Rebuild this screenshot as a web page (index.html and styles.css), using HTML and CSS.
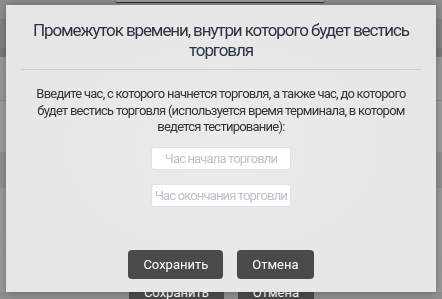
FILE: index.html
```html
<!DOCTYPE html>
<html lang="ru">
<head>
    <meta charset="UTF-8">
    <meta name="viewport" content="width=device-width, initial-scale=1.0">
    <title>Торговое время</title>
    <link rel="stylesheet" href="styles.css">
</head>
<body>
    <!-- страница под затемнением -->
    <div class="page">
        <div class="band band-top"><div class="top-field"></div></div>
        <div class="band band-2"></div>
        <div class="band band-3"></div>
        <div class="band band-4"></div>
        <div class="band band-line"></div>
        <div class="band band-5"></div>
        <div class="band band-6"></div>
        <div class="band band-7">
            <div class="page-actions">
                <button class="btn btn-dim">Сохранить</button>
                <button class="btn btn-dim">Отмена</button>
            </div>
        </div>
    </div>

    <!-- модальное окно -->
    <div class="modal">
        <h2 class="modal-title">Промежуток времени, внутри которого будет вестись торговля</h2>
        <hr class="modal-sep">
        <p class="modal-text">Введите час, с которого начнется торговля, а также час, до которого будет вестись торговля (используется время терминала, в котором ведется тестирование):</p>
        <div class="fields">
            <input type="text" class="field" placeholder="Час начала торговли">
            <input type="text" class="field" placeholder="Час окончания торговли">
        </div>
        <div class="actions">
            <button class="btn">Сохранить</button>
            <button class="btn">Отмена</button>
        </div>
    </div>
</body>
</html>
```

FILE: styles.css
```css
/* базовые стили */
body { margin: 0; font-family: Roboto, "Liberation Sans", sans-serif; background: #9a9a9a; overflow: hidden; }

/* фон страницы */
.page { height: 299px; }
.band { width: 100%; }
.band-top { height: 19px; background: #8e8e8e; display: flex; justify-content: center; }
.top-field { width: 210px; height: 2px; margin-left: -2px; background: #9c9c9c; border-bottom: 1px solid #2e2e2e; border-radius: 0 0 4px 4px; }
.band-2 { height: 29px; background: #838383; }
.band-3 { height: 9px; background: #7b7b7b; }
.band-4 { height: 43px; background: #999; }
.band-line { height: 1px; background: #8a8a8a; }
.band-5 { height: 51px; background: #9d9d9d; }
.band-6 { height: 36px; background: #8f8f8f; }
.band-7 { height: 111px; background: linear-gradient(#9b9b9b, #9a9a9a 94%, #8e8e8e 94%); }
.page-actions { display: flex; justify-content: center; gap: 14px; padding: 90px 0 0 1px; }
.btn-dim { background: #2d2d2d; color: #a8a8a8; }

/* модальное окно */
.modal { position: fixed; left: 6px; top: 5px; width: 430px; height: 287px; box-sizing: border-box; padding: 15px 15px 0; background: radial-gradient(ellipse at center, #ebebeb, #e5e5e5); box-shadow: 0 0 8px rgba(0,0,0,0.3); text-align: center; }
.modal-title { margin: 0; font-size: 17px; line-height: 20px; font-weight: 400; color: #2b3240; letter-spacing: -1.1px; }
.modal-sep { margin: 9px 0 0; border: 0; border-top: 1px solid #cdcdcd; }
.modal-text { margin: 16px 0 0; padding: 0 12px; font-size: 13px; line-height: 16.5px; color: #333; letter-spacing: -0.75px; }
.fields { display: flex; flex-direction: column; align-items: center; gap: 14px; margin-top: 11px; }
.field { width: 140px; height: 23px; box-sizing: border-box; padding: 0; border: 1px solid #e2e2e2; border-radius: 3px; background: #fff; font-family: inherit; font-size: 13px; text-align: center; letter-spacing: -0.85px; outline: none; }
.field::placeholder { color: #c2bfcc; }
.actions { display: flex; justify-content: center; gap: 14px; margin-top: 43px; }

.btn { height: 29px; padding: 0 15px; border: 0; border-radius: 4px; background: #4a4a4a; color: #fff; font-family: Roboto, "Liberation Sans", sans-serif; font-size: 13px; }
```
